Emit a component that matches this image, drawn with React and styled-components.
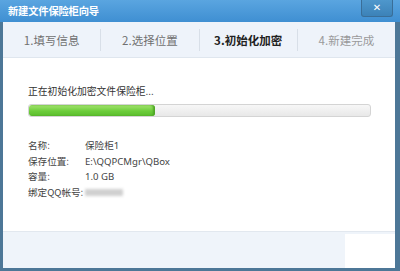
import React from "react";
import styled, { createGlobalStyle } from "styled-components";

const Global = createGlobalStyle`
  html, body { margin: 0; padding: 0; background: #fff; }
  body { font-family: "Noto Sans CJK SC", "Noto Sans", sans-serif; }
`;

const Window = styled.div`
  width: 400px;
  height: 271px;
  box-sizing: border-box;
  display: flex;
  flex-direction: column;
  background: #4d7797;
  padding: 0 5px 3px 3px;
  overflow: hidden;
`;

const TitleBar = styled.div`
  height: 22px;
  margin: 0 -5px 0 -3px;
  padding: 0 7px 0 8px;
  display: flex;
  align-items: center;
  justify-content: space-between;
  background: linear-gradient(#5aa5e0, #3f8fd2);
  flex-shrink: 0;
`;

const Title = styled.span`
  color: #fff;
  font-size: 10.3px;
  font-weight: 700;
  letter-spacing: -0.2px;
  margin-top: -1px;
`;

const CloseBtn = styled.div`
  width: 30px;
  height: 16px;
  margin-top: -6px;
  display: flex;
  align-items: center;
  justify-content: center;
  background: linear-gradient(#4e97cc, #3c82b8);
  border: 1px solid #3a6e98;
  border-top: none;
  border-radius: 0 0 3px 3px;
  color: #fff;
  font-family: "DejaVu Sans", sans-serif;
  font-size: 10px;
  font-weight: 700;
`;

const Body = styled.div`
  flex: 1;
  display: flex;
  flex-direction: column;
  background: #fff;
`;

const Steps = styled.div`
  height: 35px;
  display: flex;
  align-items: center;
  background: #eef3fa;
  border-bottom: 1px solid #dfe6ee;
  flex-shrink: 0;
`;

const Step = styled.div`
  flex: 1;
  height: 22px;
  display: flex;
  align-items: center;
  justify-content: center;
  font-size: 11.5px;
  color: ${(p) => (p.$active ? "#222" : p.$future ? "#9a9a9a" : "#707070")};
  font-weight: ${(p) => (p.$active ? 700 : 400)};
  border-left: ${(p) => (p.$first ? "none" : "1px solid #d8dfe8")};
`;

const Content = styled.div`
  flex: 1;
  padding: 27px 0 0 25px;
  display: flex;
  flex-direction: column;
`;

const Status = styled.div`
  font-size: 9.8px;
  color: #333;
  line-height: 13px;
`;

const Track = styled.div`
  margin-top: 6px;
  width: 341px;
  height: 11px;
  border: 1px solid #d4d4d4;
  border-radius: 3px;
  background: linear-gradient(#f7f7f7, #e8e8e8);
  overflow: hidden;
`;

const Fill = styled.div`
  height: 100%;
  border-radius: 3px;
  background: linear-gradient(#a6e471, #6ccd3a 55%, #5bbd2d);
  box-shadow: inset -2px 0 2px #4ea526;
`;

const Info = styled.div`
  margin-top: 22px;
  display: flex;
  flex-direction: column;
  gap: 2.7px;
`;

const Row = styled.div`
  display: flex;
  font-size: 9.6px;
  color: #444;
  line-height: 13px;
  white-space: nowrap;
`;

const Label = styled.span`
  width: 57px;
  flex-shrink: 0;
`;

const Value = styled.span`
  font-family: "Noto Sans", "Noto Sans CJK SC", sans-serif;
`;

const Blur = styled.span`
  display: inline-block;
  width: 38px;
  height: 7px;
  margin-top: 3px;
  margin-left: 0px;
  background: #d0d0d0;
  filter: blur(1.5px);
`;

const Footer = styled.div`
  height: 36px;
  display: flex;
  justify-content: flex-end;
  background: #eff4fa;
  border-top: 1px solid #e2e8ef;
  flex-shrink: 0;
`;

const FooterBlank = styled.div`
  width: 50px;
  background: #fff;
  margin-top: 2px;
`;

export default function App() {
  return (
    <>
      <Global />
      <Window>
        <TitleBar>
          <Title>新建文件保险柜向导</Title>
          <CloseBtn>✕</CloseBtn>
        </TitleBar>
        <Body>
          <Steps>
            <Step $first>1.填写信息</Step>
            <Step>2.选择位置</Step>
            <Step $active>3.初始化加密</Step>
            <Step $future>4.新建完成</Step>
          </Steps>
          <Content>
            <Status>正在初始化加密文件保险柜...</Status>
            <Track>
              <Fill style={{ width: "37%" }} />
            </Track>
            <Info>
              <Row><Label>名称:</Label><Value>保险柜1</Value></Row>
              <Row><Label>保存位置:</Label><Value>E:\QQPCMgr\QBox</Value></Row>
              <Row><Label>容量:</Label><Value>1.0 GB</Value></Row>
              <Row><Label>绑定QQ帐号:</Label><Blur /></Row>
            </Info>
          </Content>
          <Footer>
            <FooterBlank />
          </Footer>
        </Body>
      </Window>
    </>
  );
}
